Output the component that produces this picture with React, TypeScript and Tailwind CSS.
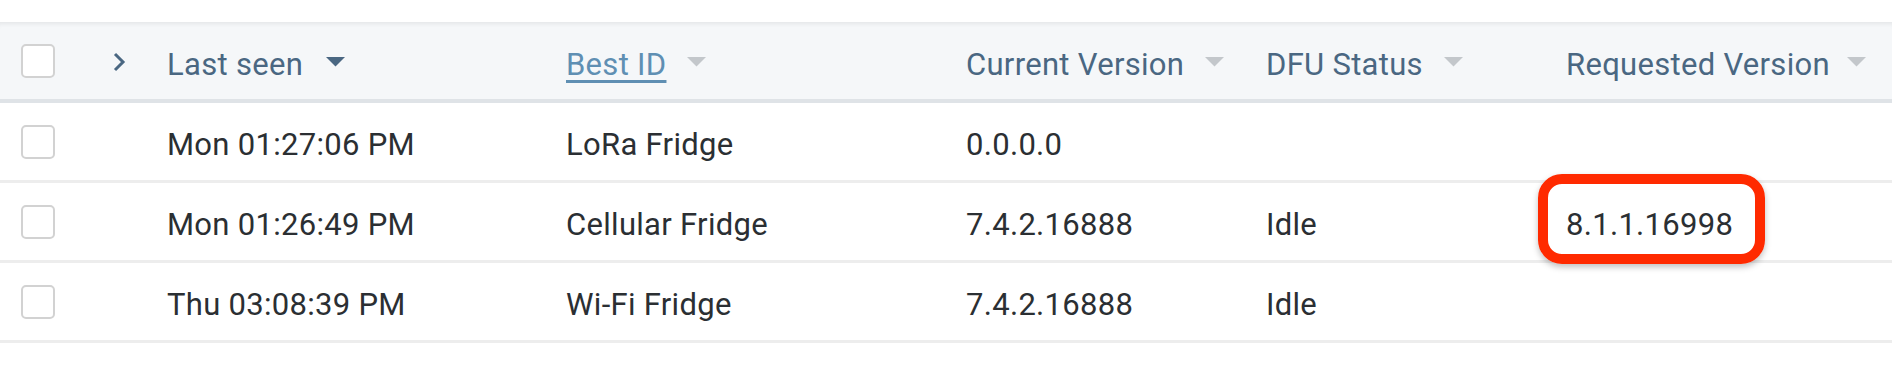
import React from "react";

const Tri = ({ dark }: { dark?: boolean }) => (
  <svg width="19" height="10" viewBox="0 0 19 10" className="shrink-0 mt-[2px]">
    <polygon points="0,0 19,0 9.5,9.5" fill={dark ? "#4a6782" : "#c3c7cb"} />
  </svg>
);

const Box = () => (
  <div className="w-[34px] h-[34px] rounded-[5px] border-2 border-[#d2d2d2] bg-white" />
);

const rows = [
  { seen: "Mon 01:27:06 PM", id: "LoRa Fridge", cur: "0.0.0.0", dfu: "", req: "" },
  { seen: "Mon 01:26:49 PM", id: "Cellular Fridge", cur: "7.4.2.16888", dfu: "Idle", req: "8.1.1.16998" },
  { seen: "Thu 03:08:39 PM", id: "Wi-Fi Fridge", cur: "7.4.2.16888", dfu: "Idle", req: "" },
];

const grid = "grid grid-cols-[100px_45px_399px_400px_300px_300px_1fr]";

export default function App() {
  return (
    <div
      className="w-[1892px] h-[374px] bg-white pt-[22px] overflow-hidden tracking-[0.3px]"
      style={{ fontFamily: "Roboto, 'Liberation Sans', sans-serif" }}
    >
      <div className={`${grid} h-[81px] bg-[#f5f7f9] border-b-4 border-[#dfe3e7] shadow-[inset_0_5px_4px_-3px_rgba(0,0,0,0.07)] text-[31px] text-[#4a6782] items-center`}>
        <div className="pl-[21px] flex items-center"><Box /></div>
        <div className="pl-[12px] flex items-center pt-[3px]">
          <svg width="14" height="20" viewBox="0 0 14 20">
            <polyline points="3,2 11,10 3,18" fill="none" stroke="#4a6782" strokeWidth="3" />
          </svg>
        </div>
        <div className="pl-[22px] flex items-center gap-[23px]">
          <span className="pt-[9px]">Last seen</span>
          <Tri dark />
        </div>
        <div className="pl-[22px] flex items-center gap-[21px]">
          <span className="pt-[9px] text-[#5f8fb3] underline decoration-[3px] underline-offset-[5px]">Best ID</span>
          <Tri />
        </div>
        <div className="pl-[22px] flex items-center gap-[21px]">
          <span className="pt-[9px]">Current Version</span>
          <Tri />
        </div>
        <div className="pl-[22px] flex items-center gap-[21px]">
          <span className="pt-[9px]">DFU Status</span>
          <Tri />
        </div>
        <div className="pl-[22px] flex items-center gap-[17px]">
          <span className="pt-[9px]">Requested Version</span>
          <Tri />
        </div>
      </div>
      {rows.map((r, i) => (
        <div
          key={i}
          className={`${grid} h-[80px] border-b-[3px] border-[#ededed] text-[31px] text-[#2b2f33] items-center`}
        >
          <div className="pl-[21px] flex items-center"><Box /></div>
          <div />
          <div className="pl-[22px] pt-[8px]">{r.seen}</div>
          <div className="pl-[22px] pt-[8px]">{r.id}</div>
          <div className="pl-[22px] pt-[8px]">{r.cur}</div>
          <div className="pl-[22px] pt-[8px]">{r.dfu}</div>
          <div className="pl-[22px] relative h-full flex items-center">
            {r.req && (
              <>
                <div className="absolute left-[-6px] top-[-9px] w-[227px] h-[90px] rounded-[24px] border-[10px] border-[#ff2a00] shadow-[0_3px_6px_rgba(0,0,0,0.25)] z-10" />
                <span className="relative z-20 pt-[8px]">{r.req}</span>
              </>
            )}
          </div>
        </div>
      ))}
    </div>
  );
}
